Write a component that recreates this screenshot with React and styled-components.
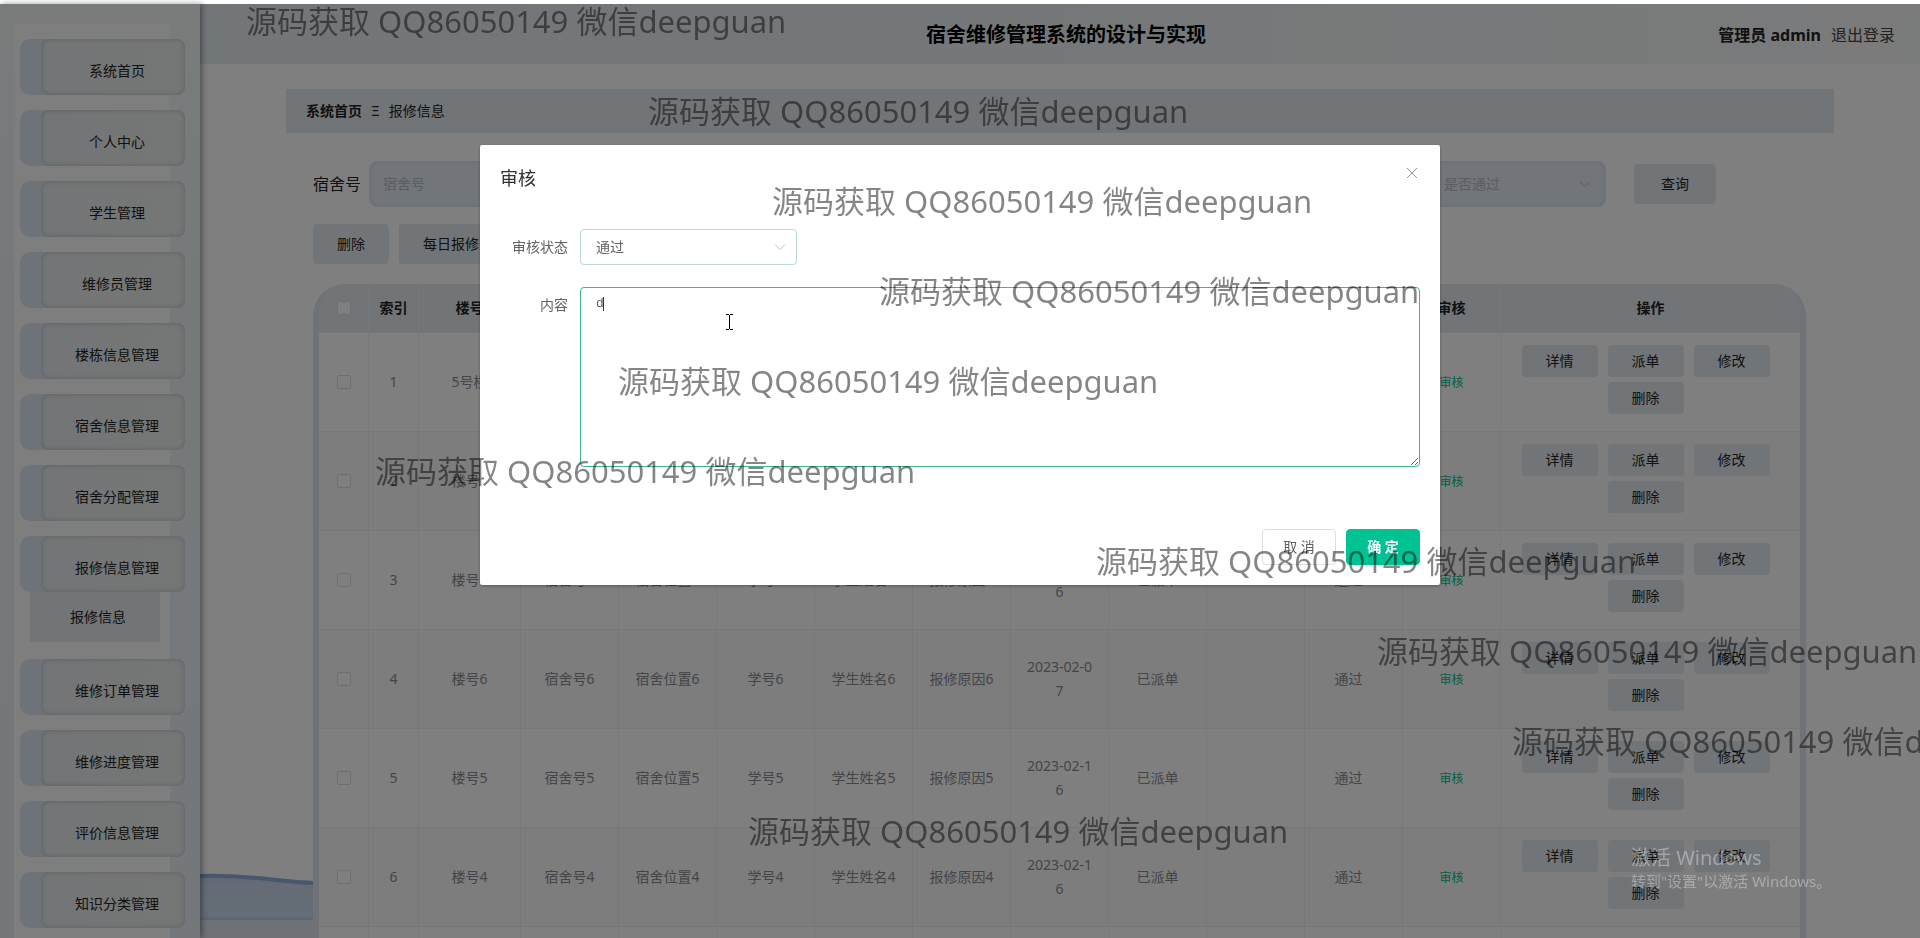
import React from "react";
import styled, { createGlobalStyle, css } from "styled-components";

const sans = `"Noto Sans", "Noto Sans CJK SC", sans-serif`;

const GlobalStyle = createGlobalStyle`
  * { box-sizing: border-box; }
  html, body { margin: 0; padding: 0; }
  body {
    overflow: hidden;
    background: #fff;
    font-family: ${sans};
    font-size: 14px;
    line-height: 20px;
    color: #222;
  }
  button, input, select { font-family: inherit; font-size: 14px; }
  a { color: inherit; text-decoration: none; }
`;

const Page = styled.div`
  display: flex;
  height: 100vh;
  padding-top: 4px;
  overflow: hidden;
`;

/* ---------- side menu ---------- */
const Sidebar = styled.nav`
  position: relative;
  z-index: 2;
  flex: 0 0 200px;
  background: linear-gradient(180deg, #f3f8f8 0%, #ecf3f5 30%, #e9f0f4 100%);
  box-shadow: 2px 0 6px rgba(0, 0, 0, 0.4);
`;

const Menu = styled.ul`
  list-style: none;
  margin: 20px 30px 0 14px;
  padding: 15px 0 60px;
  background: #fdfdfd;
`;

const MenuEntry = styled.li`
  margin: 0 -15px 15px 6px;
`;

const MenuButton = styled.button`
  display: block;
  width: 100%;
  height: 56px;
  padding: 0 0 0 21px;
  border: 0;
  border-radius: 10px;
  background: #dbe7f1;
  color: #222;
  cursor: pointer;
`;

const MenuLabel = styled.span`
  display: flex;
  align-items: center;
  justify-content: center;
  height: 100%;
  padding: 6px 0 0 8px;
  border-radius: 8px;
  background: linear-gradient(90deg, #e6ebee, #ebeded);
  box-shadow: inset 0 0 5px rgba(90, 105, 115, 0.35);
`;

const SubMenu = styled.a`
  display: flex;
  align-items: center;
  justify-content: center;
  height: 50px;
  margin: 0 25px 17px 10px;
  padding-left: 6px;
  background: #e2eaf0;
`;

/* ---------- page body ---------- */
const Main = styled.main`
  position: relative;
  flex: 1;
  min-width: 0;
`;

const Header = styled.header`
  display: grid;
  grid-template-columns: 1fr auto 1fr;
  align-items: center;
  height: 60px;
  padding: 2px 25px 0 37px;
  background: linear-gradient(90deg, #e4edf2 0%, #e9eff2 40%, #eff3f4 70%, #f5f6f7 100%);
`;

const Title = styled.h1`
  grid-column: 2;
  margin: 0;
  font-size: 20px;
  line-height: 28px;
  color: #000;
`;

const Account = styled.div`
  display: flex;
  justify-content: flex-end;
  gap: 10px;
  font-size: 16px;
  line-height: 24px;
  color: #333;

  strong { color: #222; }
  a { color: #444; }
`;

const Breadcrumb = styled.nav`
  display: flex;
  align-items: center;
  gap: 9px;
  height: 44px;
  margin: 25px 86px 0;
  padding: 0 20px;
  background: #e2eaf1;
`;

const Content = styled.section`
  position: relative;
  margin: 0 86px;
  padding: 28px 28px 0 27px;
`;

const Wave = styled.svg`
  position: absolute;
  left: 0;
  bottom: 0;
  width: 113px;
  height: 66px;
`;

const SearchRow = styled.form`
  display: flex;
  align-items: center;
  height: 46px;
  padding-right: 90px;

  label { font-size: 16px; margin-right: 8px; }
`;

const fieldStyle = css`
  height: 46px;
  border: 1px solid #dae5ef;
  border-radius: 8px;
  background: #e4ebf2;
  box-shadow: inset 0 0 4px #cfdbe6;
  color: #b4bac2;
  outline: 0;
`;

const SearchInput = styled.input`
  ${fieldStyle}
  width: 178px;
  padding: 0 13px 2px;
  &::placeholder { color: #b4bac2; }
`;

const SelectBox = styled.span`
  position: relative;
  display: block;
  width: ${(p) => p.$width}px;
  margin-left: ${(p) => (p.$end ? "auto" : 0)};
  svg { position: absolute; right: ${(p) => (p.$end ? 14 : 10)}px; top: 50%; margin-top: -7px; pointer-events: none; }
`;

const SearchSelect = styled.select`
  ${fieldStyle}
  width: 100%;
  padding: 0 15px 2px;
  appearance: none;
`;

const SoftButton = styled.button`
  width: ${(p) => p.$width || 76}px;
  height: ${(p) => p.$height || 40}px;
  padding: 0 0 2px;
  border: 0;
  border-radius: 4px;
  background: #e2eaf1;
  color: #222;
  cursor: pointer;
`;

const QueryButton = styled(SoftButton)`
  margin-left: 28px;
`;

const Toolbar = styled.div`
  display: flex;
  gap: 10px;
  margin: 17px 0 20px;
`;

const TableFrame = styled.div`
  border: solid #dfe6f0;
  border-width: 0 6px;
  border-radius: 32px 32px 0 0;
  overflow: hidden;
  background: #fff;
`;

const Table = styled.table`
  width: 100%;
  table-layout: fixed;
  border-collapse: separate;
  border-spacing: 0;
  text-align: center;

  th, td {
    border-right: 1px solid #edf0f4;
    border-bottom: 1px solid #ebeef0;
  }
  th:last-child, td:last-child { border-right: 0; }
  th { height: 49px; padding: 0; background: #e2eaf1; color: #222; white-space: nowrap; }
  td { height: 99px; padding: 0 14px; color: #888b90; line-height: 24px; word-break: break-all; }
  tbody tr:nth-child(even) { background: #fafafa; }
`;

const Tight = styled.td`
  && { padding: 0; }
`;

const Tick = styled.input`
  appearance: none;
  display: block;
  width: 14px;
  height: 14px;
  margin: 0 auto;
  border: 1px solid #dcdfe6;
  border-radius: 2px;
  background: #fff;
`;

const Verdict = styled.span`
  margin-right: 10px;
`;

const ReviewButton = styled.button`
  padding: 0;
  border: 0;
  background: none;
  color: #00c292;
  && { font-size: 12px; }
  white-space: nowrap;
`;

const Actions = styled.div`
  display: flex;
  flex-wrap: wrap;
  justify-content: center;
  padding: 0 10px;

  button { margin: 0 10px 5px 0; }
`;

/* ---------- dialog ---------- */
const Mask = styled.div`
  position: fixed;
  inset: 4px 0 0;
  z-index: 10;
  background: rgba(0, 0, 0, 0.5);
`;

const Dialog = styled.section`
  width: 50%;
  margin: 141px auto 0;
  padding: 20px;
  border-radius: 2px;
  background: #fff;
  box-shadow: 0 1px 3px rgba(0, 0, 0, 0.3);
`;

const DialogHead = styled.header`
  display: flex;
  justify-content: space-between;
  align-items: flex-start;
  height: 64px;

  h2 { margin: 0; font-size: 18px; line-height: 26px; font-weight: 400; color: #303133; }
  button { display: flex; padding: 0; border: 0; background: none; }
`;

const FormItem = styled.div`
  display: flex;
  margin-bottom: 22px;

  label { flex: 0 0 80px; padding-right: 12px; text-align: right; line-height: 36px; color: #606266; }
  label { margin-bottom: auto; }
`;

const StatusSelect = styled.select`
  display: block;
  width: 100%;
  height: 36px;
  padding: 0 15px 2px;
  border: 1px solid #b9d9d2;
  border-radius: 4px;
  background: #fff;
  color: #606266;
  appearance: none;
`;

const TextHolder = styled.div`
  position: relative;
  flex: 1;
`;

const TextArea = styled.textarea`
  display: block;
  width: 100%;
  height: 180px;
  padding: 5px 15px;
  border: 1px solid #3fb591;
  border-radius: 4px;
  outline: 0;
  font-family: "Liberation Mono", monospace;
  font-size: 13px;
  line-height: 21px;
  color: #606266;
  resize: vertical;
`;

const Caret = styled.i`
  position: absolute;
  left: 23px;
  top: 10px;
  width: 1px;
  height: 14px;
  background: #333;
`;

const DialogFoot = styled.footer`
  display: flex;
  justify-content: flex-end;
  gap: 10px;
  padding-top: 40px;
`;

const DialogButton = styled.button`
  width: 74px;
  height: 36px;
  padding: 0 0 2px;
  border: 1px solid ${(p) => (p.$primary ? "#00c292" : "#dcdfe6")};
  border-radius: 4px;
  background: ${(p) => (p.$primary ? "#00c292" : "#fff")};
  color: ${(p) => (p.$primary ? "#fff" : "#606266")};
  font-weight: ${(p) => (p.$primary ? 700 : 400)};
`;

/* ---------- marks floating over everything ---------- */
const Overlay = styled.div`
  position: fixed;
  inset: 0;
  z-index: 20;
  overflow: hidden;
  pointer-events: none;
`;

const Watermark = styled.span`
  position: absolute;
  left: ${(p) => p.$x}px;
  top: ${(p) => p.$y - 20}px;
  font-size: 31px;
  line-height: 40px;
  white-space: nowrap;
  color: rgba(0, 0, 0, 0.48);
`;

const Activate = styled.div`
  position: absolute;
  left: 1631px;
  top: 845px;
  color: rgba(255, 255, 255, 0.34);
  font-size: 15px;
  line-height: 20px;
  white-space: nowrap;

  b { display: block; font-size: 20px; line-height: 26px; font-weight: 400; }
`;

const Pointer = styled.svg`
  position: absolute;
  left: 725px;
  top: 313px;
`;

const Chevron = ({ color }) => (
  <svg width="14" height="14" viewBox="0 0 14 14" fill="none" stroke={color} aria-hidden="true">
    <path d="M2 4.5 L7 9.5 L12 4.5" />
  </svg>
);

const menuTop = ["系统首页", "个人中心", "学生管理", "维修员管理", "楼栋信息管理", "宿舍信息管理", "宿舍分配管理"];
const menuBottom = ["维修订单管理", "维修进度管理", "评价信息管理", "知识分类管理"];

const columns = [
  ["索引", 50], ["楼号", 102], ["宿舍号", 98], ["宿舍位置", 98], ["学号", 98], ["学生姓名", 98],
  ["报修原因", 98], ["报修日期", 98], ["派单状态", 98], ["审核回复", 98], ["审核状态", 98], ["审核", 98], ["操作", 299],
];

const rows = [
  { n: "8", building: "5号楼", date: "2023-02-16" },
  { n: "8", building: "楼号8", date: "2023-02-16" },
  { n: "7", building: "楼号7", date: "2023-02-16" },
  { n: "6", building: "楼号6", date: "2023-02-07" },
  { n: "5", building: "楼号5", date: "2023-02-16" },
  { n: "4", building: "楼号4", date: "2023-02-16" },
  { n: "3", building: "楼号3", date: "2023-02-16" },
];

const marks = [
  [246, 21], [648, 111], [772, 201], [879, 291], [618, 381],
  [375, 471], [1096, 561], [1377, 651], [1512, 741], [748, 831],
];

const MenuItem = ({ children }) => (
  <MenuButton type="button"><MenuLabel>{children}</MenuLabel></MenuButton>
);

export default function App() {
  return (
    <>
      <GlobalStyle />
      <Page>
        <Sidebar>
          <Menu>
            {menuTop.map((m) => <MenuEntry key={m}><MenuItem>{m}</MenuItem></MenuEntry>)}
            <MenuEntry>
              <MenuItem>报修信息管理</MenuItem>
              <SubMenu href="#repairs">报修信息</SubMenu>
            </MenuEntry>
            {menuBottom.map((m) => <MenuEntry key={m}><MenuItem>{m}</MenuItem></MenuEntry>)}
          </Menu>
        </Sidebar>

        <Main>
          <Wave viewBox="0 0 113 66" preserveAspectRatio="none" aria-hidden="true">
            <defs>
              <linearGradient id="wave" x1="0" y1="0" x2="0" y2="1">
                <stop offset="0" stopColor="#b8cdec" />
                <stop offset="0.25" stopColor="#cbd9ea" />
                <stop offset="0.9" stopColor="#cadcf0" />
                <stop offset="1" stopColor="#b4cbe8" />
              </linearGradient>
            </defs>
            <rect y="47" width="113" height="19" fill="#dde3eb" />
            <path d="M0 3 C40 1 76 8 113 9 V48 H0Z" fill="url(#wave)" />
            <path d="M0 4 C40 2 76 9 113 11" fill="none" stroke="#8eaede" strokeWidth="4" />
          </Wave>

          <Header>
            <Title>宿舍维修管理系统的设计与实现</Title>
            <Account>
              <strong>管理员 admin</strong>
              <a href="#logout">退出登录</a>
            </Account>
          </Header>

          <Breadcrumb>
            <strong>系统首页</strong>
            <span>Ξ</span>
            <span>报修信息</span>
          </Breadcrumb>

          <Content>
            <SearchRow>
              <label htmlFor="dorm">宿舍号</label>
              <SearchInput id="dorm" placeholder="宿舍号" />
              <SelectBox $width={178} $end>
                <SearchSelect aria-label="是否通过" defaultValue="">
                  <option value="">是否通过</option>
                </SearchSelect>
                <Chevron color="#b4bac2" />
              </SelectBox>
              <QueryButton type="button" $width={82}>查询</QueryButton>
            </SearchRow>

            <Toolbar>
              <SoftButton type="button">删除</SoftButton>
              <SoftButton type="button" $width={104}>每日报修</SoftButton>
            </Toolbar>

            <TableFrame>
              <Table>
                <colgroup>
                  <col width="50" />
                  {columns.map(([name, width]) => <col key={name} width={width} />)}
                </colgroup>
                <thead>
                  <tr>
                    <th><Tick type="checkbox" aria-label="全选" /></th>
                    {columns.map(([name]) => <th key={name}>{name}</th>)}
                  </tr>
                </thead>
                <tbody>
                  {rows.map((r, i) => (
                    <tr key={i}>
                      <Tight><Tick type="checkbox" aria-label={`选择第${i + 1}行`} /></Tight>
                      <Tight>{i + 1}</Tight>
                      <td>{r.building}</td>
                      <td>宿舍号{r.n}</td>
                      <td>宿舍位置{r.n}</td>
                      <td>学号{r.n}</td>
                      <td>学生姓名{r.n}</td>
                      <td>报修原因{r.n}</td>
                      <td>{r.date}</td>
                      <td>已派单</td>
                      <td />
                      <td><Verdict>通过</Verdict></td>
                      <td><ReviewButton type="button">审核</ReviewButton></td>
                      <Tight>
                        <Actions>
                          {["详情", "派单", "修改", "删除"].map((a) => (
                            <SoftButton key={a} type="button" $height={32}>{a}</SoftButton>
                          ))}
                        </Actions>
                      </Tight>
                    </tr>
                  ))}
                </tbody>
              </Table>
            </TableFrame>
          </Content>
        </Main>
      </Page>

      <Mask>
        <Dialog role="dialog" aria-labelledby="dialog-title">
          <DialogHead>
            <h2 id="dialog-title">审核</h2>
            <button type="button" aria-label="关闭">
              <svg width="16" height="16" viewBox="0 0 16 16" stroke="#909399" fill="none">
                <path d="M3 3 L13 13 M13 3 L3 13" />
              </svg>
            </button>
          </DialogHead>
          <FormItem>
            <label htmlFor="status">审核状态</label>
            <SelectBox $width={217}>
              <StatusSelect id="status" defaultValue="通过">
                <option>通过</option>
                <option>不通过</option>
              </StatusSelect>
              <Chevron color="#c0c4cc" />
            </SelectBox>
          </FormItem>
          <FormItem>
            <label htmlFor="reply">内容</label>
            <TextHolder>
              <TextArea id="reply" defaultValue="d" spellCheck={false} />
              <Caret />
            </TextHolder>
          </FormItem>
          <DialogFoot>
            <DialogButton type="button">取 消</DialogButton>
            <DialogButton type="button" $primary>确 定</DialogButton>
          </DialogFoot>
        </Dialog>
      </Mask>

      <Overlay>
        {marks.map(([x, y]) => (
          <Watermark key={y} $x={x} $y={y}>源码获取 QQ86050149 微信deepguan</Watermark>
        ))}
        <Activate><b>激活 Windows</b>转到"设置"以激活 Windows。</Activate>
        <Pointer width="9" height="18" viewBox="0 0 9 18" fill="none" stroke="#000" aria-hidden="true">
          <path d="M1 1.5 H4 M5 1.5 H8 M4.5 2 V16 M1 16.5 H4 M5 16.5 H8" />
        </Pointer>
      </Overlay>
    </>
  );
}
